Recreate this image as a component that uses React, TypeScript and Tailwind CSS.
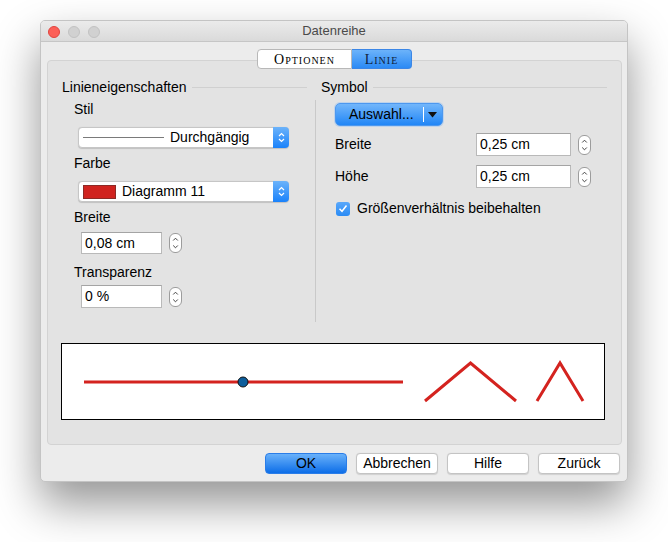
import React from "react";

const font = { fontFamily: '"Liberation Sans", Arial, sans-serif' };

function UpDown({ color }: { color: string }) {
  return (
    <svg width="7" height="11" viewBox="0 0 7 11">
      <path d="M1 4 L3.5 1.5 L6 4" fill="none" stroke={color} strokeWidth="1.2" />
      <path d="M1 7 L3.5 9.5 L6 7" fill="none" stroke={color} strokeWidth="1.2" />
    </svg>
  );
}

function Stepper() {
  return (
    <div className="w-[13px] h-[20px] rounded-[6px] border border-[#9c9c9c] bg-white flex items-center justify-center">
      <svg width="7" height="14" viewBox="0 0 7 14">
        <path d="M1.2 4.5 L3.5 2.2 L5.8 4.5" fill="none" stroke="#444" strokeWidth="1" />
        <path d="M1.2 9.5 L3.5 11.8 L5.8 9.5" fill="none" stroke="#444" strokeWidth="1" />
      </svg>
    </div>
  );
}

function Select({ children }: { children: React.ReactNode }) {
  return (
    <div className="w-[211px] h-[21px] flex items-stretch rounded-[4px] bg-white border border-[#c6c6c6] shadow-[0_0.5px_1px_rgba(0,0,0,0.15)]">
      <div className="flex-1 flex items-center pl-[4px] overflow-hidden">{children}</div>
      <div className="w-[16px] -my-px -mr-px rounded-r-[4px] bg-[linear-gradient(#6cb3fa,#1a82fb)] flex items-center justify-center">
        <UpDown color="#ffffff" />
      </div>
    </div>
  );
}

function Input({ value, w, h }: { value: string; w: number; h: number }) {
  return (
    <div
      className="bg-white border border-[#b9b9b9] border-t-[#a4a4a4] flex items-center pl-[3px] text-[14px] text-black"
      style={{ width: w, height: h }}
    >
      {value}
    </div>
  );
}

function Button({ label, primary }: { label: string; primary?: boolean }) {
  return (
    <div
      className={
        "w-[82px] h-[21px] rounded-[4px] flex items-center justify-center text-[14px] text-black " +
        (primary
          ? "bg-[linear-gradient(#69b1fa,#0d6ee8)] border border-[#2a7de8]"
          : "bg-white border border-[#c4c4c4] shadow-[0_0.5px_1px_rgba(0,0,0,0.12)]")
      }
    >
      {label}
    </div>
  );
}

export default function App() {
  return (
    <div className="w-[668px] h-[542px] bg-white pt-[20px] pl-[40px]" style={font}>
      <div className="w-[588px] h-[462px] rounded-[5px] bg-[#ececec] border border-[#c4c4c4] shadow-[0_22px_45px_rgba(0,0,0,0.42)] flex flex-col overflow-hidden">
        {/* Title bar */}
        <div className="h-[21px] shrink-0 border-b border-[#c6c6c6] bg-[linear-gradient(#ebebeb,#dadada)] relative flex items-center justify-center">
          <div className="absolute left-[7px] top-[5px] flex gap-[8px]">
            <div className="w-[12px] h-[12px] rounded-full bg-[#fc5f57] border border-[#e0443e]" />
            <div className="w-[12px] h-[12px] rounded-full bg-[#d1d1d1] border border-[#c2c2c2]" />
            <div className="w-[12px] h-[12px] rounded-full bg-[#d1d1d1] border border-[#c2c2c2]" />
          </div>
          <span className="text-[13px] text-[#4a4a4a]">Datenreihe</span>
        </div>

        {/* Body */}
        <div className="flex-1 flex flex-col pl-[6px] pr-[5px] pb-[7px]">
          {/* Tabs */}
          <div className="mt-[7px] h-[20px] flex justify-center relative z-10">
            <div
              className="w-[95px] h-[20px] bg-white border border-[#b8b8b8] rounded-l-[4px] flex items-center justify-center text-[14px] text-black tracking-[1px]"
              style={{ fontFamily: '"Liberation Serif", serif', fontVariant: "small-caps" }}
            >
              Optionen
            </div>
            <div
              className="w-[60px] h-[20px] bg-[linear-gradient(#6cb3fa,#2b8af5)] border border-[#3b86e6] border-l-0 rounded-r-[4px] flex items-center justify-center text-[14px] text-[#10213a] tracking-[1px]"
              style={{ fontFamily: '"Liberation Serif", serif', fontVariant: "small-caps" }}
            >
              Linie
            </div>
          </div>

          {/* Panel */}
          <div className="-mt-[9px] h-[385px] shrink-0 rounded-[4px] bg-[#e3e3e3] border border-[#d3d3d3] flex flex-col">
            <div className="flex pt-[18px]">
              {/* Left column */}
              <div className="w-[267px] flex flex-col text-[14px] text-black">
                <div className="h-[16px] flex items-center pl-[14px] pr-[8px]">
                  <span className="leading-[16px]">Linieneigenschaften</span>
                  <div className="flex-1 ml-[5px] h-px bg-[#fafafa] border-t border-[#d0d0d0]" />
                </div>
                <div className="mt-[6px] pl-[26px] leading-[16px]">Stil</div>
                <div className="mt-[10px] ml-[30px]">
                  <Select>
                    <div className="w-[81px] h-px bg-[#7a7a7a]" />
                    <span className="ml-[6px]">Durchgängig</span>
                  </Select>
                </div>
                <div className="mt-[7px] pl-[26px] leading-[16px]">Farbe</div>
                <div className="mt-[10px] ml-[30px]">
                  <Select>
                    <div className="w-[33px] h-[14px] bg-[#d0231f] border border-[#8c2a26]" />
                    <span className="ml-[6px]">Diagramm 11</span>
                  </Select>
                </div>
                <div className="mt-[7px] pl-[26px] leading-[16px]">Breite</div>
                <div className="mt-[7px] ml-[33px] flex items-center gap-[7px]">
                  <Input value="0,08 cm" w={81} h={22} />
                  <Stepper />
                </div>
                <div className="mt-[10px] pl-[26px] leading-[16px]">Transparenz</div>
                <div className="mt-[5px] ml-[33px] flex items-center gap-[7px]">
                  <Input value="0 %" w={81} h={23} />
                  <Stepper />
                </div>
              </div>

              {/* Right column */}
              <div className="flex-1 flex flex-col text-[14px] text-black">
                <div className="h-[16px] flex items-center pl-[6px] pr-[14px]">
                  <span className="leading-[16px]">Symbol</span>
                  <div className="flex-1 ml-[5px] h-px bg-[#fafafa] border-t border-[#d0d0d0]" />
                </div>
                <div className="mt-[5px] h-[222px] border-l border-[#c9c9c9] flex flex-col pt-[3px]">
                  <div className="ml-[19px] w-[108px] h-[23px] rounded-[5px] bg-[linear-gradient(#72b6fb,#2186f6)] border border-[#4d98ef] shadow-[0_0_0_1px_rgba(120,180,250,0.35)] flex items-center">
                    <span className="ml-[13px] w-[74px] whitespace-nowrap">Auswahl...</span>
                    <div className="w-px h-[15px] bg-white" />
                    <svg width="9" height="6" viewBox="0 0 9 6" className="ml-[4px]">
                      <path d="M0 0 L9 0 L4.5 5.5 Z" fill="#111" />
                    </svg>
                  </div>
                  <div className="mt-[7px] flex items-center">
                    <span className="pl-[19px] w-[160px]">Breite</span>
                    <Input value="0,25 cm" w={95} h={23} />
                    <div className="ml-[7px]">
                      <Stepper />
                    </div>
                  </div>
                  <div className="mt-[9px] flex items-center">
                    <span className="pl-[19px] w-[160px]">Höhe</span>
                    <Input value="0,25 cm" w={95} h={23} />
                    <div className="ml-[7px]">
                      <Stepper />
                    </div>
                  </div>
                  <div className="mt-[10px] ml-[20px] flex items-center">
                    <div className="w-[14px] h-[14px] rounded-[3px] bg-[linear-gradient(#5aa8fa,#2a8bf5)] flex items-center justify-center">
                      <svg width="10" height="9" viewBox="0 0 10 9">
                        <path d="M1.5 4.8 L4 7.3 L8.5 1.5" fill="none" stroke="#fff" strokeWidth="1.5" />
                      </svg>
                    </div>
                    <span className="ml-[7px]">Größenverhältnis beibehalten</span>
                  </div>
                </div>
              </div>
            </div>

            {/* Preview */}
            <div className="mt-[21px] ml-[13px] w-[544px] h-[77px] bg-white border border-black">
              <svg width="542" height="75" viewBox="1 1 542 75">
                <line x1="23" y1="39" x2="342" y2="39" stroke="#d4231f" strokeWidth="3" />
                <circle cx="182" cy="39" r="5" fill="#0d5e9c" stroke="#111" strokeWidth="1" />
                <polyline points="364,58 409.5,20 455,58" fill="none" stroke="#d4231f" strokeWidth="3" />
                <polyline points="476,58 499,20 522,58" fill="none" stroke="#d4231f" strokeWidth="3" />
              </svg>
            </div>
          </div>

          {/* Buttons */}
          <div className="mt-[8px] flex justify-end pr-[2px] gap-[9px]">
            <Button label="OK" primary />
            <Button label="Abbrechen" />
            <Button label="Hilfe" />
            <Button label="Zurück" />
          </div>
        </div>
      </div>
    </div>
  );
}
